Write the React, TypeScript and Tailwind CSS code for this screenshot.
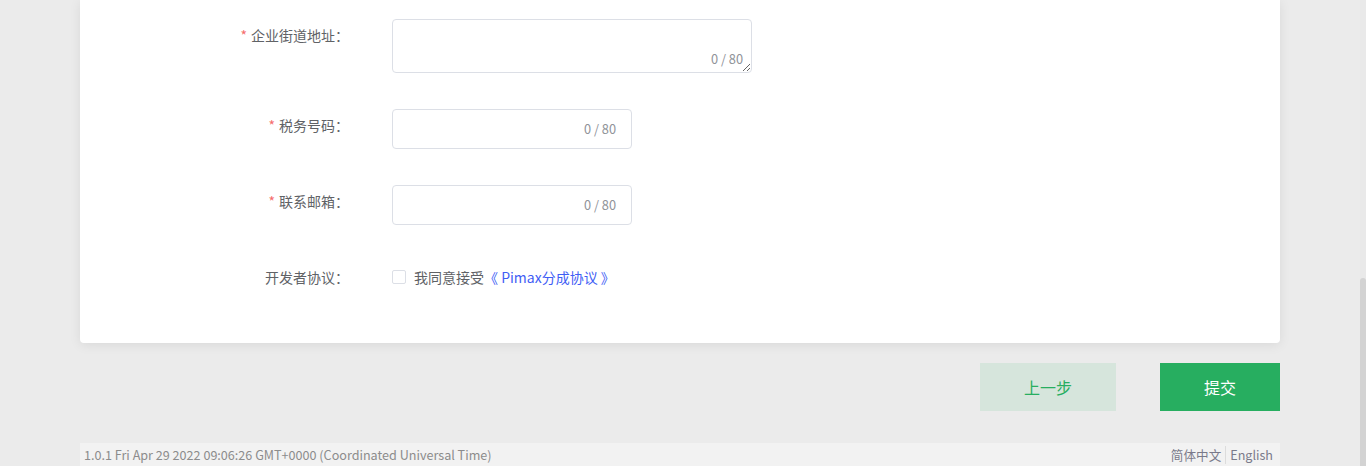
import React from 'react'

const FONT = { fontFamily: '"Microsoft YaHei", "Noto Sans CJK SC", "Noto Sans", sans-serif' }

function Label({ text, required }: { text: string; required?: boolean }) {
  return (
    <div className="w-[269px] shrink-0 text-right text-[14px] leading-[32px] text-[#606266]">
      {required && <span className="mr-[4px] text-[#f56c6c]">*</span>}
      {text}：
    </div>
  )
}

function Counter() {
  return <span className="text-[12.8px] text-[#909399]">0 / 80</span>
}

export default function App() {
  return (
    <div className="flex h-[466px] w-[1366px] overflow-hidden bg-[#ebebeb]" style={FONT}>
      <div className="flex-1 flex flex-col">
        {/* 表单卡片（顶部已滚出） */}
        <div className="mx-auto w-[1200px] rounded-b-[4px] bg-white pt-[19px] pb-[50px] shadow-[0_2px_12px_rgba(0,0,0,0.08)]">
          <div className="flex">
            <Label text="企业街道地址" required />
            <div className="relative ml-[43px]">
              <textarea className="block h-[54px] w-[360px] rounded-[4px] border border-[#dcdfe6] bg-white px-[15px] py-[5px] text-[14px] outline-none" />
              <div className="absolute bottom-[4px] right-[9px]">
                <Counter />
              </div>
            </div>
          </div>

          <div className="mt-[36px] flex">
            <Label text="税务号码" required />
            <div className="ml-[43px] flex h-[40px] w-[240px] items-center justify-end rounded-[4px] border border-[#dcdfe6] px-[15px]">
              <Counter />
            </div>
          </div>

          <div className="mt-[36px] flex">
            <Label text="联系邮箱" required />
            <div className="ml-[43px] flex h-[40px] w-[240px] items-center justify-end rounded-[4px] border border-[#dcdfe6] px-[15px]">
              <Counter />
            </div>
          </div>

          <div className="mt-[36px] flex">
            <Label text="开发者协议" />
            <div className="ml-[43px] flex h-[32px] items-center text-[14px]">
              <span className="h-[14px] w-[14px] rounded-[2px] border border-[#dcdfe6] bg-white" />
              <span className="ml-[8px] text-[#606266]">我同意接受</span>
              <span className="text-[#3f5ef5]">《 Pimax分成协议 》</span>
            </div>
          </div>
        </div>

        {/* 操作按钮 */}
        <div className="mx-auto mt-[20px] flex w-[1200px] justify-end gap-[44px]">
          <button className="h-[48px] w-[136px] bg-[#d6e5dc] text-[16px] text-[#27ae60]">上一步</button>
          <button className="h-[48px] w-[120px] bg-[#27ae60] text-[16px] text-white">提交</button>
        </div>

        {/* 页脚 */}
        <div className="mx-auto mt-[32px] flex h-[26px] w-[1200px] items-start justify-between bg-[#f2f2f2] px-[4px] pt-[2px] text-[12.6px] leading-[20px] text-[#8c8c8c]">
          <span>1.0.1 Fri Apr 29 2022 09:06:26 GMT+0000 (Coordinated Universal Time)</span>
          <div className="flex items-center text-[#7a7a8a]">
            <span>简体中文</span>
            <span className="mx-[4px] h-[18px] w-px bg-[#dcdcdc]" />
            <span className="pr-[3px]">English</span>
          </div>
        </div>
      </div>

      {/* 滚动条 */}
      <div className="flex w-[6px] flex-col bg-[#e9e9e9]">
        <div className="h-[278px]" />
        <div className="flex-1 rounded-t-[3px] bg-[#d3d3d3]" />
      </div>
    </div>
  )
}
